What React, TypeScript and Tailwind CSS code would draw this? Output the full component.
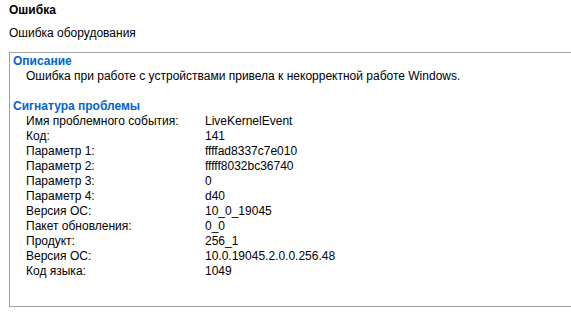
const rows: [string, string][] = [
  ['Имя проблемного события:', 'LiveKernelEvent'],
  ['Код:', '141'],
  ['Параметр 1:', 'ffffad8337c7e010'],
  ['Параметр 2:', 'fffff8032bc36740'],
  ['Параметр 3:', '0'],
  ['Параметр 4:', 'd40'],
  ['Версия ОС:', '10_0_19045'],
  ['Пакет обновления:', '0_0'],
  ['Продукт:', '256_1'],
  ['Версия ОС:', '10.0.19045.2.0.0.256.48'],
  ['Код языка:', '1049'],
]

export default function App() {
  return (
    <div
      className="w-[571px] h-[318px] bg-white overflow-hidden text-[12px] leading-[15px] text-black"
      style={{ fontFamily: '"Liberation Sans", Arial, sans-serif' }}
    >
      <div className="pl-[9px] pt-[3px]">
        <div className="font-bold">Ошибка</div>
        <div className="mt-[8px]">Ошибка оборудования</div>
      </div>
      <div className="ml-[9px] mt-[11px] w-[600px] h-[255px] border border-[#a0a0a0]">
        <div className="pl-[3px] pt-[1px]">
          <div className="font-bold text-[#0066cc]">Описание</div>
          <div className="pl-[13px]">
            Ошибка при работе с устройствами привела к некорректной работе Windows.
          </div>
          <div className="mt-[15px] font-bold text-[#0066cc]">Сигнатура проблемы</div>
          <div className="pl-[13px]">
            {rows.map(([k, v], i) => (
              <div key={i} className="flex">
                <span className="w-[179px] shrink-0">{k}</span>
                <span>{v}</span>
              </div>
            ))}
          </div>
        </div>
      </div>
    </div>
  )
}
